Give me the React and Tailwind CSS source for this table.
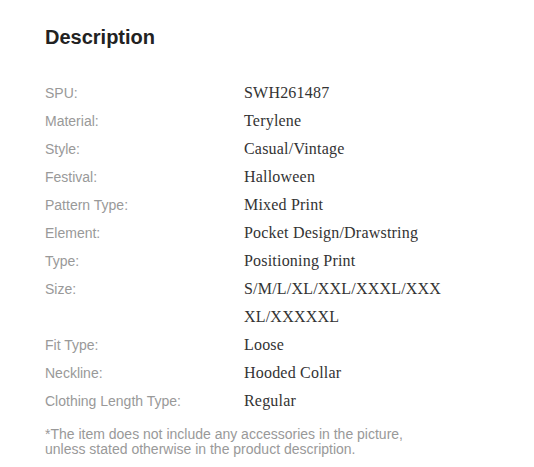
const rows = [
  ["SPU:", "SWH261487"],
  ["Material:", "Terylene"],
  ["Style:", "Casual/Vintage"],
  ["Festival:", "Halloween"],
  ["Pattern Type:", "Mixed Print"],
  ["Element:", "Pocket Design/Drawstring"],
  ["Type:", "Positioning Print"],
  ["Size:", ["S/M/L/XL/XXL/XXXL/XXX", "XL/XXXXXL"]],
  ["Fit Type:", "Loose"],
  ["Neckline:", "Hooded Collar"],
  ["Clothing Length Type:", "Regular"],
];

const App = () => {
  return (
    <div className="min-h-screen bg-white pl-[45px] pr-6 pt-[23px] font-['Liberation_Sans',Arial,sans-serif]">
      <h2 className="text-xl leading-7 font-bold text-[#222]">Description</h2>
      <div className="mt-7">
        {rows.map(([label, value]) => (
          <div key={label} className="flex text-sm leading-7">
            <div className="w-[199px] shrink-0 text-[#999]">{label}</div>
            <div className="text-base leading-7 tracking-[0.2px] text-[#333] font-['Liberation_Serif','Times_New_Roman',serif]">
              {Array.isArray(value)
                ? value.map((line) => <div key={line}>{line}</div>)
                : value}
            </div>
          </div>
        ))}
      </div>
      <p className="mt-3 text-sm leading-[15px] text-[#999]">
        *The item does not include any accessories in the picture,
        <br />
        unless stated otherwise in the product description.
      </p>
    </div>
  );
};

export default App;
